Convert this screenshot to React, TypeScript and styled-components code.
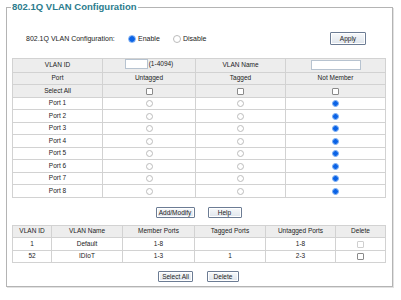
import React from 'react'
import styled, { createGlobalStyle } from 'styled-components'

const Global = createGlobalStyle`
    html, body {
        margin: 0;
        padding: 0;
        background: #fff;
    }
    body {
        font-family: "Liberation Sans", Arial, sans-serif;
        color: #222;
    }
`
const Page = styled.div`
    width: 401px;
    height: 300px;
    padding: 0 8px 0 6px;
    box-sizing: border-box;
`
const Frame = styled.fieldset`
    margin: 0;
    padding: 18px 7px 12px 5px;
    border: 1px solid #b4b4b4;
    box-shadow: 1px 1px 0 #e2e2e2;
    min-width: 0;
    height: 287px;
    box-sizing: border-box;
`
const Title = styled.legend`
    margin-left: -1px;
    padding: 0 1px;
    font-size: 9.5px;
    line-height: 14px;
    font-weight: bold;
    color: #2b7c8d;
`
const ConfigRow = styled.div`
    display: flex;
    align-items: center;
    height: 13px;
    padding-left: 14px;
    padding-right: 19px;
    margin-bottom: 13px;
    font-size: 7px;
`
const ConfigLabel = styled.span`
    width: 102px;
`
const Option = styled.label<{ $width: number }>`
    display: flex;
    align-items: center;
    gap: 2px;
    width: ${(p) => p.$width}px;
`
const Spacer = styled.div`
    flex: 1;
`
const Radio = styled.input.attrs({ type: 'radio' })<{ $big?: boolean }>`
    appearance: none;
    margin: 0;
    width: ${(p) => (p.$big ? 8 : 7)}px;
    height: ${(p) => (p.$big ? 8 : 7)}px;
    border-radius: 50%;
    border: 1px solid #bcbcbc;
    background: #fff;
    box-sizing: border-box;
    vertical-align: middle;
    &:checked {
        border-color: #7eb0f4;
        background: radial-gradient(circle, #0b63e6 60%, #4f8ff0 75%);
    }
`
const Check = styled.input.attrs({ type: 'checkbox' })`
    appearance: none;
    margin: 0;
    width: 7px;
    height: 7px;
    border: 1px solid #8a8a8a;
    border-radius: 1px;
    background: #fff;
    box-sizing: border-box;
    vertical-align: middle;
    &:disabled {
        border-color: #cfcfcf;
    }
`
const Button = styled.button<{ $w: number; $h?: number }>`
    width: ${(p) => p.$w}px;
    height: ${(p) => p.$h ?? 11}px;
    padding: 0;
    font-family: "Liberation Sans", Arial, sans-serif;
    font-size: 6.5px;
    color: #222;
    border: 1px solid #6c7c94;
    border-radius: 1px;
    background: linear-gradient(#f7f9fb, #dfe5ec);
    box-shadow: inset 0 0 0 1px #fff;
`
const Grid = styled.table`
    width: 373px;
    border-collapse: collapse;
    table-layout: fixed;
    font-size: 6.5px;
`
const Row = styled.tr<{ $head?: boolean }>`
    background: ${(p) => (p.$head ? '#ededed' : '#fff')};
`
const Cell = styled.td`
    height: 11.5px;
    padding: 0;
    border: 1px solid #d2d2d2;
    text-align: center;
    vertical-align: middle;
    line-height: 10px;
    white-space: nowrap;
`
const Field = styled.input.attrs({ type: 'text' })<{ $w: number }>`
    width: ${(p) => p.$w}px;
    height: 10px;
    margin: 0;
    padding: 0;
    border: 1px solid #b7c3d0;
    box-sizing: border-box;
    vertical-align: middle;
`
const IdWrap = styled.span`
    display: inline-flex;
    align-items: center;
    gap: 1px;
`
const Actions = styled.div<{ $gap: number; $top: number }>`
    display: flex;
    justify-content: center;
    gap: ${(p) => p.$gap}px;
    width: 373px;
    margin-top: ${(p) => p.$top}px;
`
const ListGrid = styled(Grid)`
    margin-top: 7px;
`

const ports = [1, 2, 3, 4, 5, 6, 7, 8]

const vlans = [
    { id: '1', name: 'Default', member: '1-8', tagged: '', untagged: '1-8', locked: true },
    { id: '52', name: 'IDIoT', member: '1-3', tagged: '1', untagged: '2-3', locked: false },
]

const App = () => (
    <Page>
        <Global />
        <Frame>
            <Title>802.1Q VLAN Configuration</Title>
            <ConfigRow>
                <ConfigLabel>802.1Q VLAN Configuration:</ConfigLabel>
                <Option $width={45}>
                    <Radio $big name="mode" defaultChecked />
                    Enable
                </Option>
                <Option $width={40}>
                    <Radio $big name="mode" />
                    Disable
                </Option>
                <Spacer />
                <Button $w={36} $h={13}>Apply</Button>
            </ConfigRow>
            <Grid>
                <colgroup>
                    <col style={{ width: 90 }} />
                    <col style={{ width: 93 }} />
                    <col style={{ width: 90 }} />
                    <col style={{ width: 100 }} />
                </colgroup>
                <tbody>
                    <Row $head>
                        <Cell>VLAN ID</Cell>
                        <Cell>
                            <IdWrap>
                                <Field $w={23} />
                                (1-4094)
                            </IdWrap>
                        </Cell>
                        <Cell>VLAN Name</Cell>
                        <Cell>
                            <Field $w={50} />
                        </Cell>
                    </Row>
                    <Row $head>
                        <Cell>Port</Cell>
                        <Cell>Untagged</Cell>
                        <Cell>Tagged</Cell>
                        <Cell>Not Member</Cell>
                    </Row>
                    <Row $head>
                        <Cell>Select All</Cell>
                        <Cell>
                            <Check />
                        </Cell>
                        <Cell>
                            <Check />
                        </Cell>
                        <Cell>
                            <Check />
                        </Cell>
                    </Row>
                    {ports.map((n) => (
                        <Row key={n}>
                            <Cell>Port {n}</Cell>
                            <Cell>
                                <Radio name={`p${n}`} />
                            </Cell>
                            <Cell>
                                <Radio name={`p${n}`} />
                            </Cell>
                            <Cell>
                                <Radio name={`p${n}`} defaultChecked />
                            </Cell>
                        </Row>
                    ))}
                </tbody>
            </Grid>
            <Actions $gap={13} $top={9}>
                <Button $w={39}>Add/Modify</Button>
                <Button $w={34}>Help</Button>
            </Actions>
            <ListGrid>
                <colgroup>
                    <col style={{ width: 39 }} />
                    <col style={{ width: 71 }} />
                    <col style={{ width: 72 }} />
                    <col style={{ width: 71 }} />
                    <col style={{ width: 70 }} />
                    <col style={{ width: 50 }} />
                </colgroup>
                <tbody>
                    <Row $head>
                        <Cell>VLAN ID</Cell>
                        <Cell>VLAN Name</Cell>
                        <Cell>Member Ports</Cell>
                        <Cell>Tagged Ports</Cell>
                        <Cell>Untagged Ports</Cell>
                        <Cell>Delete</Cell>
                    </Row>
                    {vlans.map((v) => (
                        <Row key={v.id}>
                            <Cell>{v.id}</Cell>
                            <Cell>{v.name}</Cell>
                            <Cell>{v.member}</Cell>
                            <Cell>{v.tagged}</Cell>
                            <Cell>{v.untagged}</Cell>
                            <Cell>
                                <Check disabled={v.locked} />
                            </Cell>
                        </Row>
                    ))}
                </tbody>
            </ListGrid>
            <Actions $gap={14} $top={8}>
                <Button $w={35}>Select All</Button>
                <Button $w={32}>Delete</Button>
            </Actions>
        </Frame>
    </Page>
)

export default App
